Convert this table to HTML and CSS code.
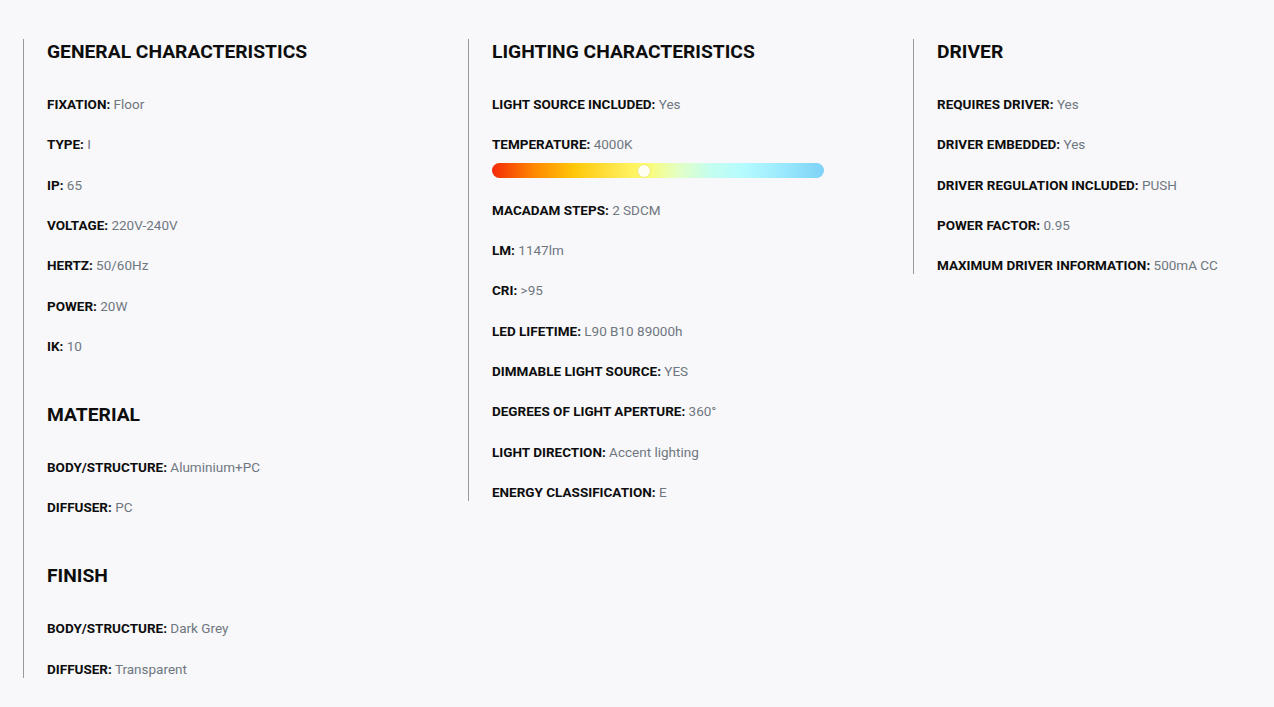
FILE: index.html
```html
<!DOCTYPE html>
<html lang="en">
<head>
<meta charset="utf-8">
<title>Specifications</title>
<link rel="stylesheet" href="styles.css">
</head>
<body>
<div class="specs">
  <div class="col">
    <section class="group">
      <h2>GENERAL CHARACTERISTICS</h2>
      <div class="rows">
        <p class="row"><b>FIXATION:</b> <span>Floor</span></p>
        <p class="row"><b>TYPE:</b> <span>I</span></p>
        <p class="row"><b>IP:</b> <span>65</span></p>
        <p class="row"><b>VOLTAGE:</b> <span>220V-240V</span></p>
        <p class="row"><b>HERTZ:</b> <span>50/60Hz</span></p>
        <p class="row"><b>POWER:</b> <span>20W</span></p>
        <p class="row"><b>IK:</b> <span>10</span></p>
      </div>
    </section>
    <section class="group">
      <h2>MATERIAL</h2>
      <div class="rows">
        <p class="row"><b>BODY/STRUCTURE:</b> <span>Aluminium+PC</span></p>
        <p class="row"><b>DIFFUSER:</b> <span>PC</span></p>
      </div>
    </section>
    <section class="group">
      <h2>FINISH</h2>
      <div class="rows">
        <p class="row"><b>BODY/STRUCTURE:</b> <span>Dark Grey</span></p>
        <p class="row"><b>DIFFUSER:</b> <span>Transparent</span></p>
      </div>
    </section>
  </div>
  <div class="col">
    <section class="group">
      <h2>LIGHTING CHARACTERISTICS</h2>
      <div class="rows">
        <p class="row"><b>LIGHT SOURCE INCLUDED:</b> <span>Yes</span></p>
        <div class="row-wrap">
          <p class="row"><b>TEMPERATURE:</b> <span>4000K</span></p>
          <div class="temp-bar"><div class="knob" style="left: 45.8%"></div></div>
        </div>
        <p class="row"><b>MACADAM STEPS:</b> <span>2 SDCM</span></p>
        <p class="row"><b>LM:</b> <span>1147lm</span></p>
        <p class="row"><b>CRI:</b> <span>&gt;95</span></p>
        <p class="row"><b>LED LIFETIME:</b> <span>L90 B10 89000h</span></p>
        <p class="row"><b>DIMMABLE LIGHT SOURCE:</b> <span>YES</span></p>
        <p class="row"><b>DEGREES OF LIGHT APERTURE:</b> <span>360°</span></p>
        <p class="row"><b>LIGHT DIRECTION:</b> <span>Accent lighting</span></p>
        <p class="row"><b>ENERGY CLASSIFICATION:</b> <span>E</span></p>
      </div>
    </section>
  </div>
  <div class="col">
    <section class="group">
      <h2>DRIVER</h2>
      <div class="rows">
        <p class="row"><b>REQUIRES DRIVER:</b> <span>Yes</span></p>
        <p class="row"><b>DRIVER EMBEDDED:</b> <span>Yes</span></p>
        <p class="row"><b>DRIVER REGULATION INCLUDED:</b> <span>PUSH</span></p>
        <p class="row"><b>POWER FACTOR:</b> <span>0.95</span></p>
        <p class="row"><b>MAXIMUM DRIVER INFORMATION:</b> <span>500mA CC</span></p>
      </div>
    </section>
  </div>
</div>
</body>
</html>
```

FILE: styles.css
```css
html, body {
  margin: 0;
  padding: 0;
  background: #f8f8fa;
}

body {
  font-family: Roboto, "Liberation Sans", Arial, sans-serif;
  color: #111;
}

.specs {
  display: grid;
  grid-template-columns: 445px 445px 1fr;
  align-items: start;
  padding: 39px 0 0 23px;
}

.col {
  border-left: 1px solid #9a9a9a;
  padding-left: 23px;
  display: flex;
  flex-direction: column;
  gap: 47px;
}

.group {
  display: flex;
  flex-direction: column;
}

h2 {
  margin: 0 0 30px;
  font-size: 19.25px;
  line-height: 26px;
  font-weight: 700;
  color: #0d0d0d;
}

.rows {
  display: flex;
  flex-direction: column;
  gap: 22.33px;
}

.row {
  margin: 0;
  font-size: 13.5px;
  line-height: 18px;
  height: 18px;
  white-space: nowrap;
}

.row b {
  font-weight: 700;
  color: #0d0d0d;
}

.row span {
  color: #6f7780;
}

.temp-bar {
  position: relative;
  width: 332px;
  height: 15px;
  margin-top: 10px;
  border-radius: 8px;
  background: linear-gradient(to right,
    #f42a08 0%,
    #ff8a00 13%,
    #ffc80a 25%,
    #ffe64a 37%,
    #fdfb6e 46%,
    #e3ffc4 56%,
    #c4fdf0 66%,
    #b4fbff 76%,
    #99e8fd 88%,
    #7ed2f6 100%);
}

.knob {
  position: absolute;
  top: 1.5px;
  width: 12px;
  height: 12px;
  margin-left: -6px;
  border-radius: 50%;
  background: #fffef5;
  box-shadow: 0 0 2px rgba(0, 0, 0, 0.15);
}
```
